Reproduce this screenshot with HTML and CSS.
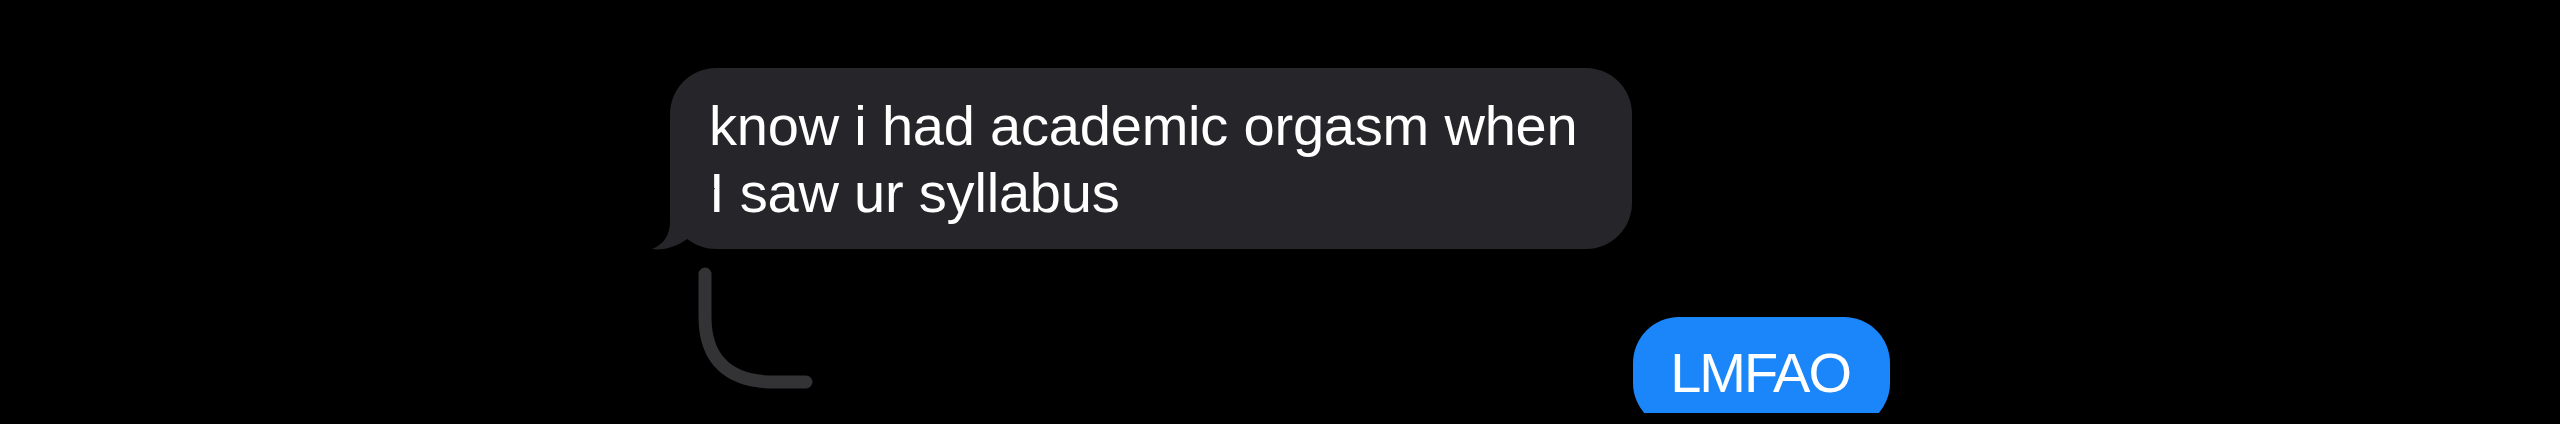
FILE: index.html
```html
<!DOCTYPE html>
<html lang="en">
<head>
<meta charset="utf-8">
<title>Messages</title>
<link rel="stylesheet" href="styles.css">
</head>
<body>
<main class="chat">
  <div class="bubble bubble-in">
    <p class="bubble-text">know i had academic orgasm when<br>I saw ur syllabus</p>
    <svg class="tail" viewBox="-18 120 64 62" width="64" height="62" aria-hidden="true">
      <path d="M0 118 L0 153 C0 167 -6 176 -18 181 C-4 183 10 177 20 169 L46 118 Z" fill="#262529"/>
    </svg>
  </div>
  <div class="thread-row">
    <svg class="reply-line" viewBox="0 0 116 122" width="116" height="122" aria-hidden="true">
      <path d="M7 7 V50 C7 94 32 115 76 115 H108" fill="none" stroke="#333336" stroke-width="13" stroke-linecap="round"/>
    </svg>
    <div class="bubble bubble-out">
      <p class="bubble-text">LMFAO</p>
    </div>
  </div>
</main>
</body>
</html>
```

FILE: styles.css
```css
* {
  box-sizing: border-box;
}

html, body {
  margin: 0;
  padding: 0;
  background: #000;
}

body {
  height: 424px;
  overflow: hidden;
}

.chat {
  width: 1256px;
  height: 413px;
  margin: 0 auto;
  padding: 68px 18px 0;
  overflow: hidden;
  display: flex;
  flex-direction: column;
}

.bubble {
  position: relative;
  border-radius: 46px;
  color: #fff;
  font-family: "Liberation Sans", Arial, sans-serif;
  font-size: 56px;
  line-height: 67px;
  letter-spacing: -0.2px;
}

.bubble-text {
  margin: 0;
  white-space: nowrap;
}

.bubble-in {
  align-self: flex-start;
  background: #262529;
  padding: 24px 55px 23px 39px;
}

.tail {
  position: absolute;
  left: -18px;
  bottom: -1px;
  display: block;
}

.thread-row {
  display: flex;
  justify-content: space-between;
  align-items: flex-start;
  margin-top: 18px;
}

.reply-line {
  display: block;
  margin-left: 28px;
}

.bubble-out {
  margin-top: 50px;
  background: #1b86fa;
  padding: 22px 40px 23px 37px;
  letter-spacing: -2px;
}
```
